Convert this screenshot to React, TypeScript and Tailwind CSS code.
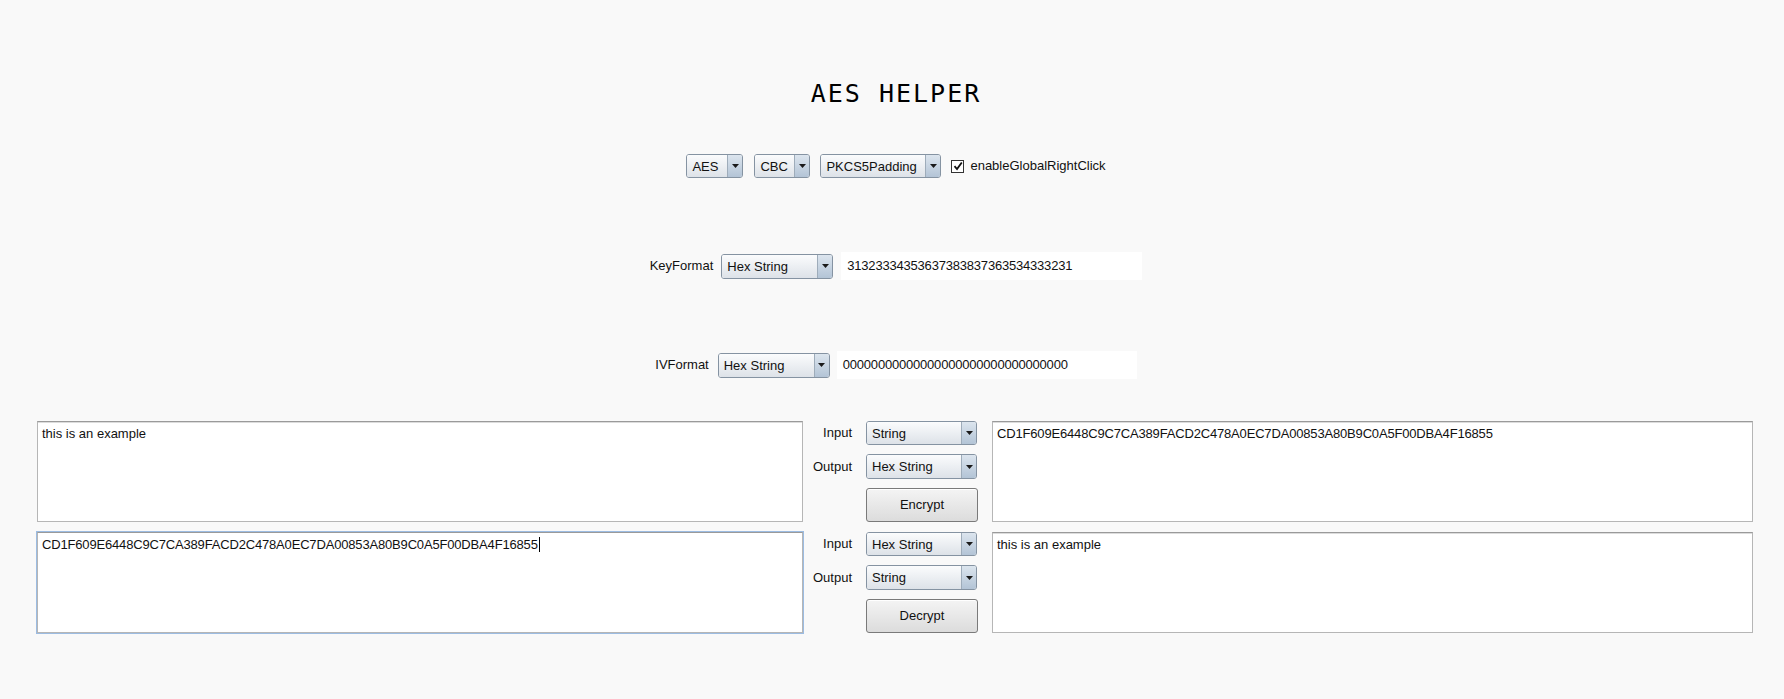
import React from "react";

const HEX = "CD1F609E6448C9C7CA389FACD2C478A0EC7DA00853A80B9C0A5F00DBA4F16855";

function Arrow() {
    return (
        <svg width="7" height="4" viewBox="0 0 7 4">
            <path d="M0 0 H7 L3.5 4 Z" fill="#1a1a1a" />
        </svg>
    );
}

function Combo({ value, w, h = "h-[25px]" }: { value: string; w: string; h?: string }) {
    return (
        <div className={`flex ${w} ${h} shrink-0 overflow-hidden rounded-[3px] border border-[#8593a2]`}>
            <div className="flex flex-1 items-center bg-linear-to-b from-[#fbfcfd] to-[#dde2e8] pl-[5px] text-[13px] leading-none text-[#111]">
                {value}
            </div>
            <div className="flex w-[15px] items-center justify-center border-l border-[#9eacba] bg-linear-to-b from-[#dce5ee] to-[#b3c4d6]">
                <Arrow />
            </div>
        </div>
    );
}

function Button({ label }: { label: string }) {
    return (
        <div className="flex h-[34px] w-[112px] items-center justify-center rounded-[3px] border border-[#7a7a7a] bg-linear-to-b from-[#f4f4f4] to-[#dcdcdc] text-[13px] text-[#111] shadow-[inset_0_1px_0_#ffffff]">
            {label}
        </div>
    );
}

function TextBox({ children, w, focused = false }: { children?: React.ReactNode; w: string; focused?: boolean }) {
    return (
        <div
            className={`${w} h-[101px] shrink-0 border border-[#b6b6b6] border-t-[#9a9a9a] bg-white px-[4px] pt-[4px] text-[13px] leading-[15px] text-[#111] ${
                focused ? "shadow-[0_0_0_1px_#9cbce2]" : "shadow-[inset_0_1px_0_#dcdcdc]"
            }`}
        >
            {children}
        </div>
    );
}

function Middle({ input, output, action }: { input: string; output: string; action: string }) {
    return (
        <div className="grid w-[189px] shrink-0 grid-cols-[49px_111px] grid-rows-[24px_25px_34px] gap-x-[14px] gap-y-[9px] text-[13px] text-[#111]">
            <div className="flex items-center justify-end">Input</div>
            <Combo value={input} w="w-[111px]" h="h-[24px]" />
            <div className="flex items-center justify-end">Output</div>
            <Combo value={output} w="w-[111px]" />
            <div />
            <Button label={action} />
        </div>
    );
}

export default function App() {
    return (
        <div
            className="flex min-h-[699px] w-full flex-col bg-[#f9f9f9] text-[13px] text-[#111]"
            style={{ fontFamily: '"Liberation Sans", Arial, sans-serif' }}
        >
            {/* title */}
            <div className="flex justify-center pl-[8px] pt-[76px]">
                <h1
                    className="h-[36px] text-[25px] leading-[36px] tracking-[2px] text-black"
                    style={{ fontFamily: '"DejaVu Sans Mono", monospace' }}
                >
                    AES HELPER
                </h1>
            </div>

            {/* algorithm options */}
            <div className="mt-[40px] flex h-[28px] items-center justify-center pl-[8px]">
                <Combo value="AES" w="w-[57px]" h="h-[24px]" />
                <div className="ml-[11px]">
                    <Combo value="CBC" w="w-[56px]" h="h-[24px]" />
                </div>
                <div className="ml-[10px]">
                    <Combo value="PKCS5Padding" w="w-[121px]" h="h-[24px]" />
                </div>
                <div className="ml-[10px] flex h-[13px] w-[13px] items-center justify-center border border-[#333] bg-white">
                    <svg width="10" height="10" viewBox="0 0 10 10">
                        <path d="M1.5 5.2 L4 8 L8.8 1.5" fill="none" stroke="#111" strokeWidth="1.8" />
                    </svg>
                </div>
                <span className="ml-[6px]">enableGlobalRightClick</span>
            </div>

            {/* key */}
            <div className="mt-[72px] flex h-[28px] items-center justify-center pl-[8px]">
                <span>KeyFormat</span>
                <div className="ml-[8px]">
                    <Combo value="Hex String" w="w-[112px]" />
                </div>
                <div className="ml-[8px] flex h-[28px] w-[301px] items-center bg-white pl-[6px] tracking-[-0.2px]">
                    31323334353637383837363534333231
                </div>
            </div>

            {/* iv */}
            <div className="mt-[71px] flex h-[28px] items-center justify-center pl-[8px]">
                <span>IVFormat</span>
                <div className="ml-[9px]">
                    <Combo value="Hex String" w="w-[112px]" />
                </div>
                <div className="ml-[7px] flex h-[28px] w-[300px] items-center bg-white pl-[6px] tracking-[-0.2px]">
                    00000000000000000000000000000000
                </div>
            </div>

            {/* encrypt / decrypt */}
            <div className="mt-[42px] flex flex-col gap-[10px] pl-[37px]">
                <div className="flex">
                    <TextBox w="w-[766px]">this is an example</TextBox>
                    <Middle input="String" output="Hex String" action="Encrypt" />
                    <TextBox w="w-[761px]">
                        <span className="tracking-[-0.17px]">{HEX}</span>
                    </TextBox>
                </div>
                <div className="flex">
                    <TextBox w="w-[766px]" focused>
                        <span className="tracking-[-0.17px]">{HEX}</span>
                        <span className="ml-px inline-block h-[15px] w-px bg-black align-top" />
                    </TextBox>
                    <Middle input="Hex String" output="String" action="Decrypt" />
                    <TextBox w="w-[761px]">this is an example</TextBox>
                </div>
            </div>
        </div>
    );
}
